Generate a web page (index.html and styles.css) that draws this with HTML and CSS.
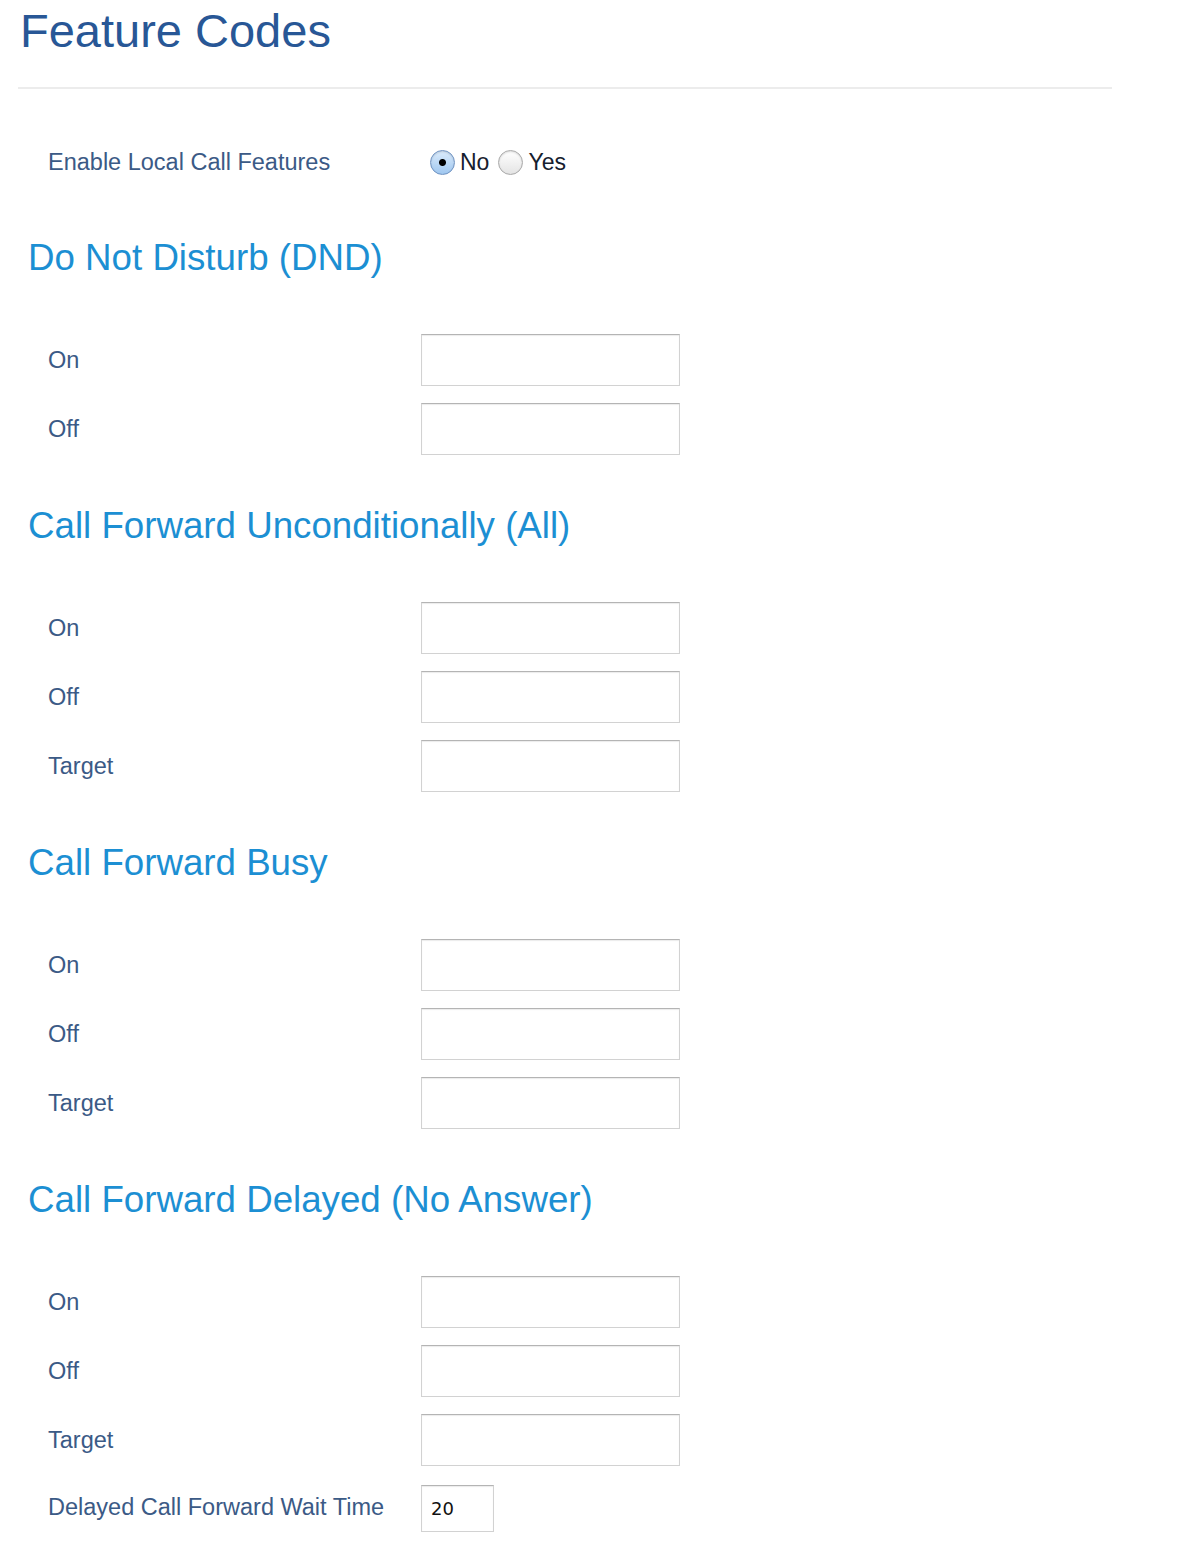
FILE: index.html
```html
<!DOCTYPE html>
<html>
<head>
<link rel="stylesheet" href="styles.css">
</head>
<body>

<h1 class="page-title">Feature Codes</h1>
<div class="rule"></div>

<form class="codes-form">

<div class="enable-row">
	<label class="field-label">Enable Local Call Features</label>
	<div class="radio-group">
		<label class="radio-opt"><input type="radio" name="local" value="0" checked>No</label>
		<label class="radio-opt"><input type="radio" name="local" value="1">Yes</label>
	</div>
</div>

<h2 class="section-title first">Do Not Disturb (DND)</h2>
<div class="field-grid">
	<label class="field-label">On</label><input type="text" class="code-input">
	<label class="field-label">Off</label><input type="text" class="code-input">
</div>

<h2 class="section-title">Call Forward Unconditionally (All)</h2>
<div class="field-grid">
	<label class="field-label">On</label><input type="text" class="code-input">
	<label class="field-label">Off</label><input type="text" class="code-input">
	<label class="field-label">Target</label><input type="text" class="code-input">
</div>

<h2 class="section-title">Call Forward Busy</h2>
<div class="field-grid">
	<label class="field-label">On</label><input type="text" class="code-input">
	<label class="field-label">Off</label><input type="text" class="code-input">
	<label class="field-label">Target</label><input type="text" class="code-input">
</div>

<h2 class="section-title">Call Forward Delayed (No Answer)</h2>
<div class="field-grid">
	<label class="field-label">On</label><input type="text" class="code-input">
	<label class="field-label">Off</label><input type="text" class="code-input">
	<label class="field-label">Target</label><input type="text" class="code-input">
	<label class="field-label">Delayed Call Forward Wait Time</label><input type="text" class="code-input short" value="20">
</div>

</form>

</body>
</html>
```

FILE: styles.css
```css
body {
	margin:0;
	background-color:#fff;
	font-family:"Liberation Sans", Arial, sans-serif;
}
h1.page-title {
	margin:0;
	padding:3px 0 0 20px;
	font-size:47px;
	font-weight:normal;
	line-height:56px;
	color:#285796;
}
div.rule {
	margin:28px 0 0 18px;
	width:1094px;
	height:2px;
	background-color:#ececec;
}
form.codes-form {
	margin:0;
	padding:0 0 10px 48px;
}
div.enable-row {
	display:grid;
	grid-template-columns:382px auto;
	align-items:center;
	margin-top:58px;
	height:30px;
}
.field-label {
	font-size:23.5px;
	color:#3b5a86;
}
div.radio-group {
	display:flex;
	align-items:center;
	gap:9px;
}
label.radio-opt {
	display:flex;
	align-items:center;
	gap:5px;
	font-size:23px;
	color:#16202e;
}
label.radio-opt input {
	appearance:none;
	-webkit-appearance:none;
	margin:0;
	width:25px;
	height:25px;
	border-radius:50%;
	border:1px solid #a9a9a9;
	background:linear-gradient(#ffffff, #e4e4e4);
	box-shadow:inset 0 1px 2px rgba(0, 0, 0, 0.15);
}
label.radio-opt input:checked {
	border-color:#6f93c2;
	background:radial-gradient(circle, #000 0 3px, transparent 4px), linear-gradient(#dcecfc, #9fc7f0);
}
h2.section-title {
	margin:49px 0 54px -20px;
	font-size:36.7px;
	font-weight:normal;
	line-height:44px;
	color:#1c8fd3;
}
h2.section-title.first {
	margin-top:59px;
}
div.field-grid {
	display:grid;
	grid-template-columns:373px auto;
	row-gap:17px;
	align-items:center;
}
input.code-input {
	box-sizing:border-box;
	width:259px;
	height:52px;
	margin:0;
	border:1px solid #d2d2d2;
	border-top-color:#b4b4b4;
	box-shadow:inset 0 1px 1px rgba(0, 0, 0, 0.08);
	font:18px "DejaVu Sans", sans-serif;
	padding:0 9px;
	color:#111;
}
input.code-input.short {
	width:73px;
	height:47px;
	margin-top:2px;
}
```
